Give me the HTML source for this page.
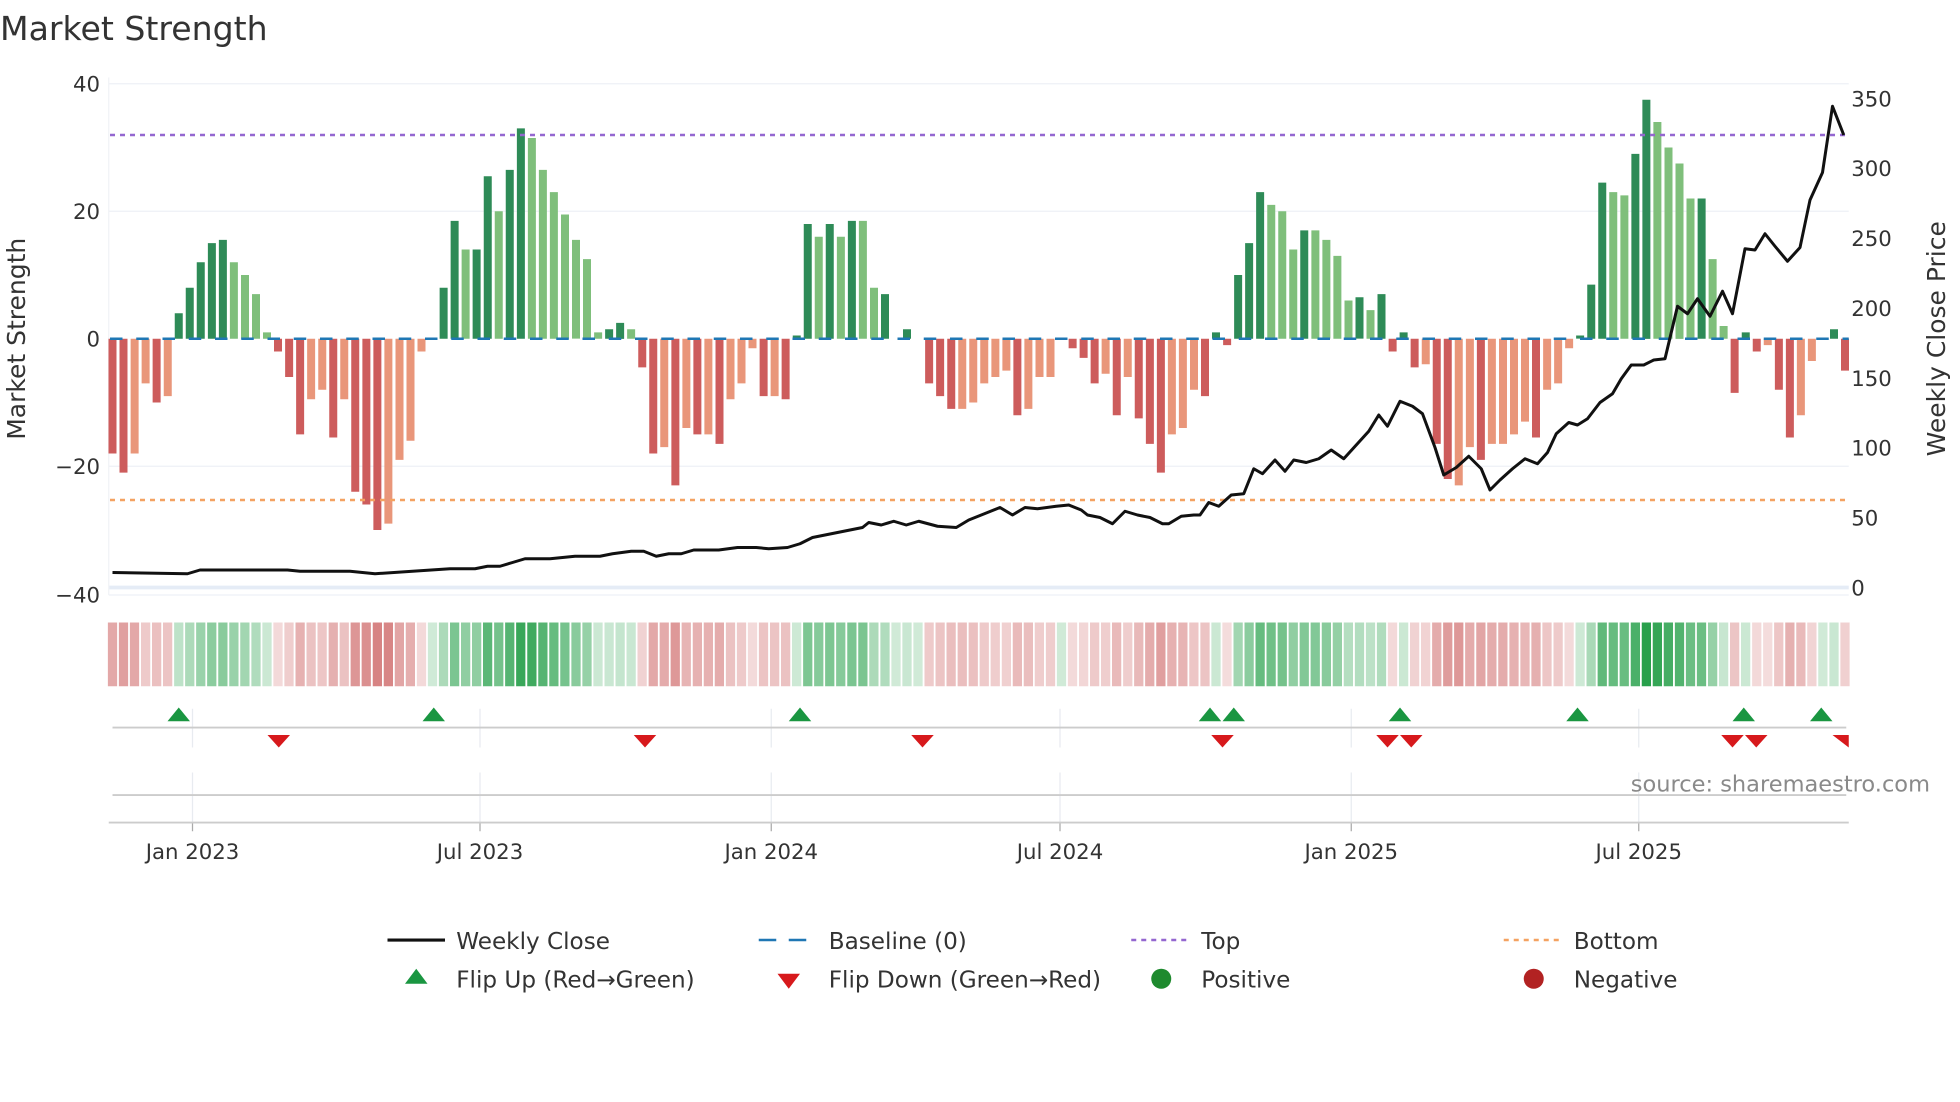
<!DOCTYPE html>
<html><head><meta charset="utf-8"><style>
html,body{margin:0;padding:0;background:#fff;width:1960px;height:1102px;overflow:hidden}
svg{display:block;font-family:"DejaVu Sans","Liberation Sans",sans-serif}
</style></head><body>
<svg id="s" width="1960" height="1102" viewBox="0 0 1568 881.6" xmlns="http://www.w3.org/2000/svg">
<text x="0" y="32" font-size="26.5" fill="#333">Market Strength</text>
</svg>
<script>
const S=document.getElementById('s');let h='';
const X0=90,X1=1476,L=87,R=1479,Z=271,U=102/20;
const v=[[-18,'r'],[-21,'r'],[-18,'l'],[-7,'l'],[-10,'r'],[-9,'l'],
[4,'d'],[8,'d'],[12,'d'],[15,'d'],[15.5,'d'],[12,'g'],[10,'g'],[7,'g'],[1,'g'],
[-2,'r'],[-6,'r'],[-15,'r'],[-9.5,'l'],[-8,'l'],[-15.5,'r'],[-9.5,'l'],[-24,'r'],[-26,'r'],[-30,'r'],[-29,'l'],[-19,'l'],[-16,'l'],[-2,'l'],
[0.2,'d'],[8,'d'],[18.5,'d'],[14,'g'],[14,'d'],[25.5,'d'],[20,'g'],[26.5,'d'],[33,'d'],[31.5,'g'],[26.5,'g'],[23,'g'],[19.5,'g'],[15.5,'g'],[12.5,'g'],[1,'g'],[1.5,'d'],[2.5,'d'],[1.5,'g'],
[-4.5,'r'],[-18,'r'],[-17,'l'],[-23,'r'],[-14,'l'],[-15,'r'],[-15,'l'],[-16.5,'r'],[-9.5,'l'],[-7,'l'],[-1.5,'l'],[-9,'r'],[-9,'l'],[-9.5,'r'],
[0.5,'d'],[18,'d'],[16,'g'],[18,'d'],[16,'g'],[18.5,'d'],[18.5,'g'],[8,'g'],[7,'d'],[0,'d'],[1.5,'d'],[0,'d'],
[-7,'r'],[-9,'r'],[-11,'r'],[-11,'l'],[-10,'l'],[-7,'l'],[-6,'l'],[-5,'l'],[-12,'r'],[-11,'l'],[-6,'l'],[-6,'l'],[0,'d'],[-1.5,'r'],[-3,'r'],[-7,'r'],[-5.5,'l'],[-12,'r'],[-6,'l'],[-12.5,'r'],[-16.5,'r'],[-21,'r'],[-15,'l'],[-14,'l'],[-8,'l'],[-9,'r'],
[1,'d'],[-1,'r'],[10,'d'],[15,'d'],[23,'d'],[21,'g'],[20,'g'],[14,'g'],[17,'d'],[17,'g'],[15.5,'g'],[13,'g'],[6,'g'],[6.5,'d'],[4.5,'g'],[7,'d'],[-2,'r'],[1,'d'],
[-4.5,'r'],[-4,'l'],[-16.5,'r'],[-22,'r'],[-23,'l'],[-17,'l'],[-19,'r'],[-16.5,'l'],[-16.5,'l'],[-15,'l'],[-13,'l'],[-15.5,'r'],[-8,'l'],[-7,'l'],[-1.5,'l'],
[0.5,'d'],[8.5,'d'],[24.5,'d'],[23,'g'],[22.5,'g'],[29,'d'],[37.5,'d'],[34,'g'],[30,'g'],[27.5,'g'],[22,'g'],[22,'d'],[12.5,'g'],[2,'g'],
[-8.5,'r'],[1,'d'],[-2,'r'],[-1,'l'],[-8,'r'],[-15.5,'r'],[-12,'l'],[-3.5,'l'],[0,'d'],[1.5,'d'],[-5,'r']];
const N=v.length,sp=(X1-X0)/(N-1),bw=sp*0.72;
const col={r:'#cd5c5c',l:'#e9967a',d:'#2e8b57',g:'#7fbf7b'};
[67,169,373,476].forEach(y=>h+=`<line x1="${L}" x2="${R}" y1="${y}" y2="${y}" stroke="#eef1f6" stroke-width="1"/>`);
h+=`<line x1="${L}" x2="${R}" y1="470" y2="470" stroke="#e5ecf6" stroke-width="3"/>`;
h+=`<line x1="${L}" x2="${L}" y1="62" y2="476" stroke="#f0f2f6"/>`;
v.forEach((b,i)=>{const x=X0+i*sp,y=Z-b[0]*U;h+=`<rect x="${(x-bw/2).toFixed(1)}" y="${Math.min(y,Z).toFixed(1)}" width="${bw.toFixed(1)}" height="${Math.abs(b[0]*U).toFixed(1)}" fill="${col[b[1]]}"/>`;
 const a=Math.min(1,0.22+Math.abs(b[0])/40*0.85);const c=b[0]>=0?`rgba(40,160,75,${a})`:`rgba(200,85,85,${a*0.85})`;
 h+=`<rect x="${(x-sp*0.42).toFixed(1)}" y="498" width="${(sp*0.84).toFixed(1)}" height="51" fill="${c}"/>`;});
h+=`<line x1="88" x2="${R}" y1="${Z}" y2="${Z}" stroke="#1f77b4" stroke-width="2" stroke-dasharray="10 11"/>`;
h+=`<line x1="88" x2="${R}" y1="108" y2="108" stroke="#9467d0" stroke-width="2" stroke-dasharray="4 4"/>`;
h+=`<line x1="88" x2="${R}" y1="400" y2="400" stroke="#f4a261" stroke-width="2" stroke-dasharray="4 4"/>`;
const p=[[90,458],[150,459],[160,456],[230,456],[240,457],[280,457],[300,459],[330,457],[360,455],[380,455],[390,453],[400,453],[410,450],[420,447],[440,447],[460,445],[480,445],[490,443],[505,441],[515,441],[525,445],[535,443],[545,443],[555,440],[575,440],[590,438],[605,438],[615,439],[630,438],[640,435],[650,430],[660,428],[670,426],[680,424],[690,422],[695,418],[705,420],[715,417],[725,420],[735,417],[750,421],[765,422],[775,416],[790,410],[800,406],[810,412],[820,406],[830,407],[845,405],[855,404],[865,408],[870,412],[880,414],[890,419],[900,409],[910,412],[920,414],[930,419],[935,419],[945,413],[955,412],[960,412],[967,402],[975,405],[985,396],[995,395],[1003,375],[1010,379],[1020,368],[1028,377],[1035,368],[1045,370],[1055,367],[1065,360],[1075,367],[1085,356],[1095,345],[1103,332],[1110,341],[1120,321],[1130,325],[1138,331],[1148,358],[1155,380],[1165,374],[1175,365],[1185,375],[1192,392],[1200,384],[1210,375],[1220,367],[1230,371],[1238,362],[1245,347],[1255,338],[1262,340],[1270,335],[1280,322],[1290,315],[1297,303],[1305,292],[1315,292],[1323,288],[1332,287],[1342,245],[1350,251],[1358,239],[1368,253],[1378,233],[1386,251],[1396,199],[1404,200],[1412,187],[1420,197],[1430,209],[1440,198],[1448,160],[1458,138],[1466,85],[1475,108]];
h+=`<polyline points="${p.map(q=>q.join(',')).join(' ')}" fill="none" stroke="#111" stroke-width="2.4" stroke-linejoin="round"/>`;
const T='font-size="17" fill="#333"';
[[40,67],[20,169],[0,271],['\u221220',373],['\u221240',476]].forEach(t=>h+=`<text x="80" y="${t[1]+6}" text-anchor="end" ${T}>${t[0]}</text>`);
[350,300,250,200,150,100,50,0].forEach((t,i)=>h+=`<text x="1481" y="${79+i*55.9+6}" ${T}>${t}</text>`);
h+=`<text transform="translate(20,271) rotate(-90)" text-anchor="middle" font-size="20" fill="#333">Market Strength</text>`;
h+=`<text transform="translate(1556,271) rotate(-90)" text-anchor="middle" font-size="20" fill="#333">Weekly Close Price</text>`;
const ticks=[[154,'Jan 2023'],[384,'Jul 2023'],[617,'Jan 2024'],[848,'Jul 2024'],[1081,'Jan 2025'],[1311,'Jul 2025']];
ticks.forEach(t=>{h+=`<line x1="${t[0]}" x2="${t[0]}" y1="567" y2="598" stroke="#e8ebf0"/><line x1="${t[0]}" x2="${t[0]}" y1="618" y2="658" stroke="#e8ebf0"/><line x1="${t[0]}" x2="${t[0]}" y1="658" y2="665" stroke="#aaa"/><text x="${t[0]}" y="687" text-anchor="middle" ${T}>${t[1]}</text>`;});
h+=`<line x1="90" x2="1477" y1="582" y2="582" stroke="#ccc" stroke-width="1.5"/><line x1="90" x2="1477" y1="636" y2="636" stroke="#ccc" stroke-width="1.5"/><line x1="87" x2="1479" y1="658" y2="658" stroke="#ccc" stroke-width="1.5"/>`;
[143,347,640,968,987,1120,1262,1395,1457].forEach(x=>h+=`<path d="M${x-9} 577L${x+9} 577L${x} 566Z" fill="#1a9641"/>`);
[223,516,738,978,1110,1129,1386,1405].forEach(x=>h+=`<path d="M${x-9} 588L${x+9} 588L${x} 598Z" fill="#d7191c"/>`);
h+=`<path d="M1466 588L1479 588L1479 598Z" fill="#d7191c"/>`;
h+=`<text x="1544" y="633" text-anchor="end" font-size="18" fill="#8a8a8a">source: sharemaestro.com</text>`;
const LT='font-size="18.5" fill="#333"';
h+=`<line x1="310" x2="356" y1="752" y2="752" stroke="#111" stroke-width="2.5"/><text x="365" y="759" ${LT}>Weekly Close</text>`;
h+=`<line x1="607" x2="653" y1="752" y2="752" stroke="#1f77b4" stroke-width="2" stroke-dasharray="14 10"/><text x="663" y="759" ${LT}>Baseline (0)</text>`;
h+=`<line x1="905" x2="951" y1="752" y2="752" stroke="#9467d0" stroke-width="2" stroke-dasharray="4 4"/><text x="961" y="759" ${LT}>Top</text>`;
h+=`<line x1="1203" x2="1249" y1="752" y2="752" stroke="#f4a261" stroke-width="2" stroke-dasharray="4 4"/><text x="1259" y="759" ${LT}>Bottom</text>`;
h+=`<path d="M324 787L342 787L333 775Z" fill="#1a9641"/><text x="365" y="790" ${LT}>Flip Up (Red\u2192Green)</text>`;
h+=`<path d="M622 779L640 779L631 791Z" fill="#d7191c"/><text x="663" y="790" ${LT}>Flip Down (Green\u2192Red)</text>`;
h+=`<circle cx="929" cy="783" r="8" fill="#1e8a2e"/><text x="961" y="790" ${LT}>Positive</text>`;
h+=`<circle cx="1227" cy="783" r="8" fill="#b22222"/><text x="1259" y="790" ${LT}>Negative</text>`;
S.insertAdjacentHTML('beforeend',h);
</script>
</body></html>
